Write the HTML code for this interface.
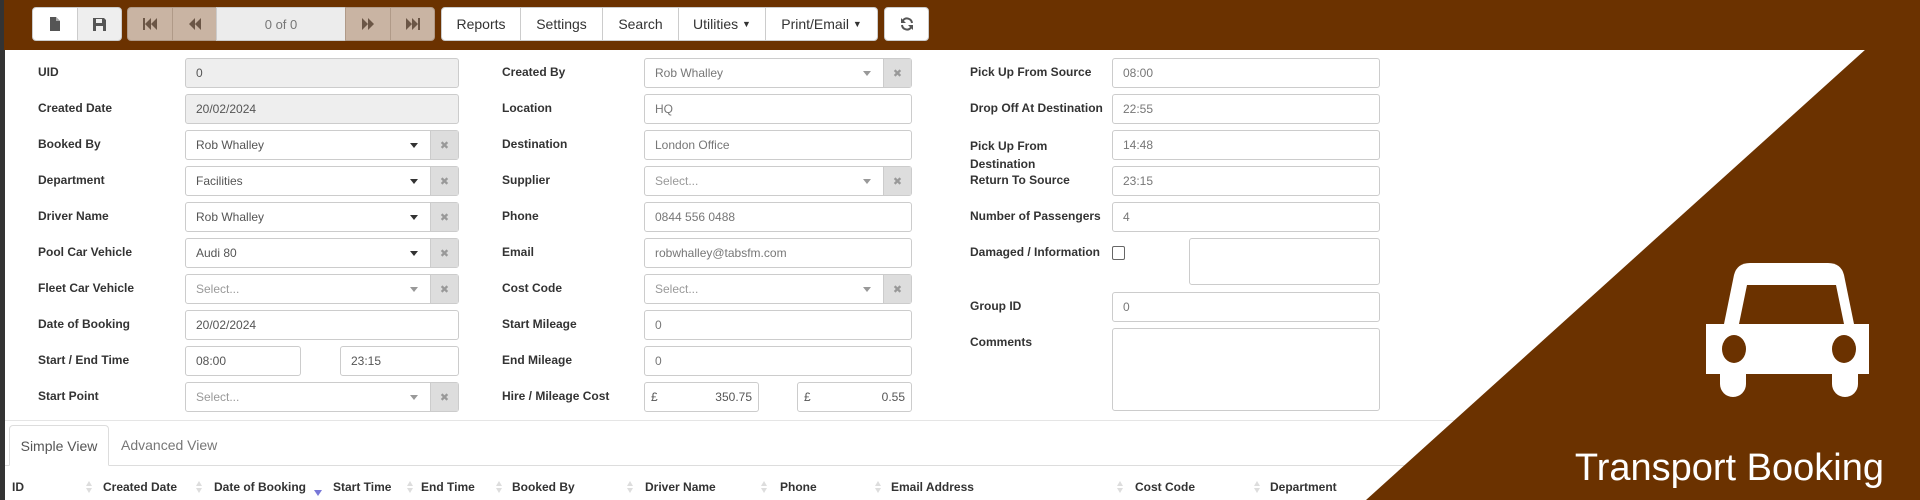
<!DOCTYPE html>
<html><head><meta charset="utf-8"><style>
*{box-sizing:border-box;margin:0;padding:0}
body{width:1920px;height:500px;overflow:hidden;background:#fff;font-family:"Liberation Sans",Arial,sans-serif;position:relative}
.abs{position:absolute}
#strip{left:0;top:0;width:5px;height:500px;background:#333}
#bar{left:4px;top:0;width:1916px;height:50px;background:#6b3200}
.btn{position:absolute;top:7px;height:34px;border:1px solid #ccc;background:#fff;display:flex;align-items:center;justify-content:center;font-size:14px;color:#333}
.tan{background:#c9b4a3;border-color:#b09a88}
.lbl{position:absolute;font-size:12px;font-weight:bold;color:#333;line-height:15px}
.inp{position:absolute;height:30px;border:1px solid #ccc;border-radius:3px;background:#fff;font-size:12px;color:#555;padding:0 10px;display:flex;align-items:center}
.dis{background:#eee}
.sel .x{position:absolute;right:0;top:0;bottom:0;width:28px;background:#ddd;border-left:1px solid #ccc;color:#999;font-size:11px;display:flex;align-items:center;justify-content:center}
.sel .ar{position:absolute;right:40px;top:12px;border-left:4px solid transparent;border-right:4px solid transparent;border-top:5px solid #333}
.ph{color:#999}
.ph .ar{border-top-color:#999}
.th{position:absolute;top:480px;font-size:12px;font-weight:bold;color:#333}
.si{position:absolute;top:481px;width:6px;height:12px}
.si:before{content:"";position:absolute;left:0;top:0;border-left:3px solid transparent;border-right:3px solid transparent;border-bottom:5px solid #ddd}
.si:after{content:"";position:absolute;left:0;top:7px;border-left:3px solid transparent;border-right:3px solid transparent;border-top:5px solid #ddd}
</style></head><body>
<div id="strip" class="abs"></div>
<div id="bar" class="abs"></div>
<!-- toolbar -->
<div class="btn" style="left:32px;width:46px;border-radius:4px 0 0 4px"><svg width="12" height="14"><path d="M1 0h6l4 4v10H1z" fill="#555"/><path d="M7 0v4h4" fill="#aaa"/></svg></div>
<div class="btn" style="left:77px;width:45px;border-radius:0 4px 4px 0;background:#eee"><svg width="13" height="13"><path d="M0 0h11l2 2v11H0z" fill="#555"/><rect x="3" y="1" width="6" height="4" fill="#eee"/><rect x="3" y="8" width="7" height="5" fill="#eee"/></svg></div>
<div class="btn tan" style="left:127px;width:46px;border-radius:4px 0 0 4px"><svg width="14" height="12"><rect x="0" y="0" width="2" height="12" fill="#6b5646"/><path d="M8 0v12L2 6zM14 0v12L8 6z" fill="#6b5646"/></svg></div>
<div class="btn tan" style="left:172px;width:45px"><svg width="12" height="12"><path d="M6 0v12L0 6zM12 0v12L6 6z" fill="#6b5646"/></svg></div>
<div class="btn" style="left:216px;width:130px;background:#ececec;color:#777;font-size:13px">0 of 0</div>
<div class="btn tan" style="left:345px;width:46px"><svg width="12" height="12"><path d="M0 0v12l6-6zM6 0v12l6-6z" fill="#6b5646"/></svg></div>
<div class="btn tan" style="left:390px;width:45px;border-radius:0 4px 4px 0"><svg width="14" height="12"><path d="M0 0v12l6-6zM6 0v12l6-6z" fill="#6b5646"/><rect x="12" y="0" width="2" height="12" fill="#6b5646"/></svg></div>
<div class="btn" style="left:441px;width:80px;border-radius:4px 0 0 4px">Reports</div>
<div class="btn" style="left:520px;width:83px">Settings</div>
<div class="btn" style="left:602px;width:77px">Search</div>
<div class="btn" style="left:678px;width:88px">Utilities&nbsp;<span style="font-size:9px">▼</span></div>
<div class="btn" style="left:765px;width:113px;border-radius:0 4px 4px 0">Print/Email&nbsp;<span style="font-size:9px">▼</span></div>
<div class="btn" style="left:884px;width:45px;border-radius:4px"><svg width="14" height="14" viewBox="0 0 14 14"><path d="M12 6A5 5 0 0 0 3 3.5M2 8a5 5 0 0 0 9 2.5" stroke="#555" stroke-width="2" fill="none"/><path d="M1 1v5h5zM13 13V8H8z" fill="#555"/></svg></div>

<!-- col1 -->
<div class="lbl" style="left:38px;top:65px">UID</div>
<div class="inp dis" style="left:185px;top:58px;width:274px">0</div>
<div class="lbl" style="left:38px;top:101px">Created Date</div>
<div class="inp dis" style="left:185px;top:94px;width:274px">20/02/2024</div>
<div class="lbl" style="left:38px;top:137px">Booked By</div>
<div class="inp sel" style="left:185px;top:130px;width:274px">Rob Whalley<span class="ar"></span><span class="x">✖</span></div>
<div class="lbl" style="left:38px;top:173px">Department</div>
<div class="inp sel" style="left:185px;top:166px;width:274px">Facilities<span class="ar"></span><span class="x">✖</span></div>
<div class="lbl" style="left:38px;top:209px">Driver Name</div>
<div class="inp sel" style="left:185px;top:202px;width:274px">Rob Whalley<span class="ar"></span><span class="x">✖</span></div>
<div class="lbl" style="left:38px;top:245px">Pool Car Vehicle</div>
<div class="inp sel" style="left:185px;top:238px;width:274px">Audi 80<span class="ar"></span><span class="x">✖</span></div>
<div class="lbl" style="left:38px;top:281px">Fleet Car Vehicle</div>
<div class="inp sel ph" style="left:185px;top:274px;width:274px">Select...<span class="ar"></span><span class="x">✖</span></div>
<div class="lbl" style="left:38px;top:317px">Date of Booking</div>
<div class="inp" style="left:185px;top:310px;width:274px">20/02/2024</div>
<div class="lbl" style="left:38px;top:353px">Start / End Time</div>
<div class="inp" style="left:185px;top:346px;width:116px">08:00</div>
<div class="inp" style="left:340px;top:346px;width:119px">23:15</div>
<div class="lbl" style="left:38px;top:389px">Start Point</div>
<div class="inp sel ph" style="left:185px;top:382px;width:274px">Select...<span class="ar"></span><span class="x">✖</span></div>

<!-- col2 -->
<div class="lbl" style="left:502px;top:65px">Created By</div>
<div class="inp sel ph" style="left:644px;top:58px;width:268px;color:#777">Rob Whalley<span class="ar"></span><span class="x">✖</span></div>
<div class="lbl" style="left:502px;top:101px">Location</div>
<div class="inp" style="left:644px;top:94px;width:268px;color:#777">HQ</div>
<div class="lbl" style="left:502px;top:137px">Destination</div>
<div class="inp" style="left:644px;top:130px;width:268px;color:#777">London Office</div>
<div class="lbl" style="left:502px;top:173px">Supplier</div>
<div class="inp sel ph" style="left:644px;top:166px;width:268px">Select...<span class="ar"></span><span class="x">✖</span></div>
<div class="lbl" style="left:502px;top:209px">Phone</div>
<div class="inp" style="left:644px;top:202px;width:268px;color:#777">0844 556 0488</div>
<div class="lbl" style="left:502px;top:245px">Email</div>
<div class="inp" style="left:644px;top:238px;width:268px;color:#777">robwhalley@tabsfm.com</div>
<div class="lbl" style="left:502px;top:281px">Cost Code</div>
<div class="inp sel ph" style="left:644px;top:274px;width:268px">Select...<span class="ar"></span><span class="x">✖</span></div>
<div class="lbl" style="left:502px;top:317px">Start Mileage</div>
<div class="inp" style="left:644px;top:310px;width:268px;color:#777">0</div>
<div class="lbl" style="left:502px;top:353px">End Mileage</div>
<div class="inp" style="left:644px;top:346px;width:268px;color:#777">0</div>
<div class="lbl" style="left:502px;top:389px">Hire / Mileage Cost</div>
<div class="inp" style="left:644px;top:382px;width:115px;justify-content:space-between;padding:0 6px">£<span>350.75</span></div>
<div class="inp" style="left:797px;top:382px;width:115px;justify-content:space-between;padding:0 6px">£<span>0.55</span></div>

<!-- col3 -->
<div class="lbl" style="left:970px;top:65px">Pick Up From Source</div>
<div class="inp" style="left:1112px;top:58px;width:268px;color:#777">08:00</div>
<div class="lbl" style="left:970px;top:101px">Drop Off At Destination</div>
<div class="inp" style="left:1112px;top:94px;width:268px;color:#777">22:55</div>
<div class="lbl" style="left:970px;top:137px;line-height:18px">Pick Up From<br>Destination</div>
<div class="inp" style="left:1112px;top:130px;width:268px;color:#777">14:48</div>
<div class="lbl" style="left:970px;top:173px">Return To Source</div>
<div class="inp" style="left:1112px;top:166px;width:268px;color:#777">23:15</div>
<div class="lbl" style="left:970px;top:209px">Number of Passengers</div>
<div class="inp" style="left:1112px;top:202px;width:268px;color:#777">4</div>
<div class="lbl" style="left:970px;top:245px">Damaged / Information</div>
<div class="abs" style="left:1112px;top:246px;width:13px;height:14px;border:1px solid #666;border-radius:2px"></div>
<div class="inp" style="left:1189px;top:238px;width:191px;height:47px"></div>
<div class="lbl" style="left:970px;top:299px">Group ID</div>
<div class="inp" style="left:1112px;top:292px;width:268px;color:#777">0</div>
<div class="lbl" style="left:970px;top:335px">Comments</div>
<div class="inp" style="left:1112px;top:328px;width:268px;height:83px"></div>

<!-- tabs -->
<div class="abs" style="left:5px;top:420px;width:1500px;height:1px;background:#e5e5e5"></div>
<div class="abs" style="left:5px;top:465px;width:1500px;height:1px;background:#ddd"></div>
<div class="abs" style="left:9px;top:425px;width:100px;height:41px;border:1px solid #ddd;border-bottom-color:#fff;border-radius:4px 4px 0 0;background:#fff;font-size:14px;color:#555;display:flex;align-items:center;justify-content:center">Simple View</div>
<div class="abs" style="left:121px;top:437px;font-size:14px;color:#777">Advanced View</div>

<!-- table header -->
<div class="th" style="left:12px">ID</div><div class="si" style="left:86px"></div>
<div class="th" style="left:103px">Created Date</div><div class="si" style="left:196px"></div>
<div class="th" style="left:214px">Date of Booking</div>
<div class="abs" style="left:314px;top:490px;border-left:4px solid transparent;border-right:4px solid transparent;border-top:6px solid #7878d8"></div>
<div class="th" style="left:333px">Start Time</div><div class="si" style="left:407px"></div>
<div class="th" style="left:421px">End Time</div><div class="si" style="left:496px"></div>
<div class="th" style="left:512px">Booked By</div><div class="si" style="left:627px"></div>
<div class="th" style="left:645px">Driver Name</div><div class="si" style="left:761px"></div>
<div class="th" style="left:780px">Phone</div><div class="si" style="left:875px"></div>
<div class="th" style="left:891px">Email Address</div><div class="si" style="left:1117px"></div>
<div class="th" style="left:1135px">Cost Code</div><div class="si" style="left:1254px"></div>
<div class="th" style="left:1270px">Department</div>

<!-- triangle + car -->
<svg class="abs" style="left:0;top:0" width="1920" height="500">
<polygon points="1866,49 1920,49 1920,500 1366,500" fill="#6b3200"/>
<path d="M1724 324 L1734 275 Q1737 263 1750 263 L1828 263 Q1841 263 1844 275 L1854 324 Z" fill="#fff"/>
<path d="M1739 324 L1747 285 L1836 285 L1844 324 Z" fill="#6b3200"/>
<rect x="1706" y="324" width="163" height="50" fill="#fff"/>
<rect x="1720" y="360" width="26" height="37" rx="13" fill="#fff"/>
<rect x="1832" y="360" width="26" height="37" rx="13" fill="#fff"/>
<ellipse cx="1734" cy="349" rx="12" ry="14" fill="#6b3200"/>
<ellipse cx="1844" cy="349" rx="12" ry="14" fill="#6b3200"/>
<text x="1884" y="480" text-anchor="end" font-family="Liberation Sans, sans-serif" font-size="38" fill="#fff">Transport Booking</text>
</svg>
</body></html>
